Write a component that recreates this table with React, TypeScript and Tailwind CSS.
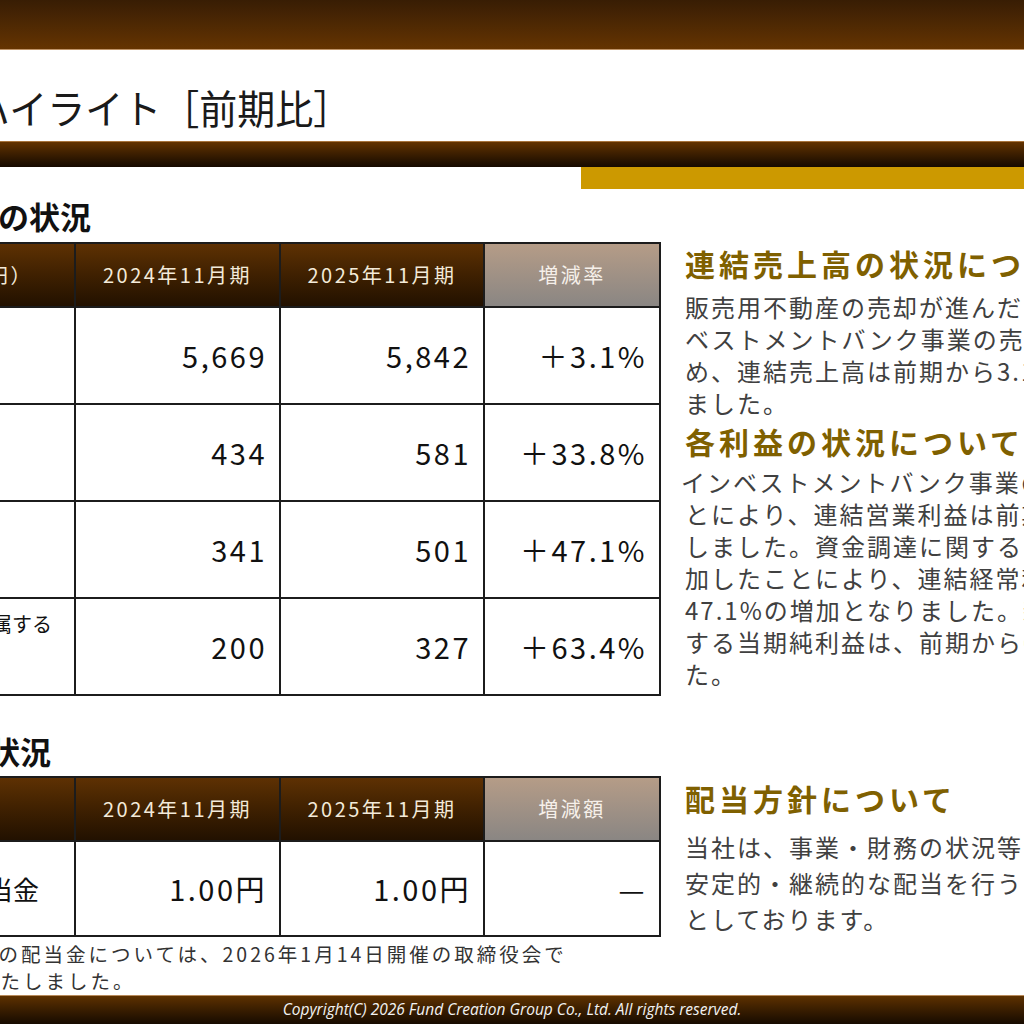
import React from "react";

const headCell =
  "flex items-center justify-center bg-linear-to-b from-[#5e3103] to-[#221100] text-[20px] tracking-[2.5px] text-[#f3ead9]";
const headCellGray =
  "flex items-center justify-center bg-linear-to-b from-[#b59c87] to-[#8a8683] text-[20px] tracking-[2.5px] text-[#f6f0ea]";
const numCell =
  "flex items-center justify-end bg-white pr-[12px] text-[29px] tracking-[2.5px] text-[#111]";

function Table1() {
  const rows: { label: string; a: string; b: string; c: string }[] = [
    { label: "売上高", a: "5,669", b: "5,842", c: "＋3.1%" },
    { label: "営業利益", a: "434", b: "581", c: "＋33.8%" },
    { label: "経常利益", a: "341", b: "501", c: "＋47.1%" },
  ];
  return (
    <div className="ml-[-165px] w-[826px] grid grid-cols-[237px_203px_202px_174px] grid-rows-[62px_95px_95px_95px_95px] gap-[2px] p-[2px] bg-[#1c1c1c]">
      <div className={headCell + " justify-end pr-[41px]"}>
        <span className="whitespace-nowrap">（単位：百万円）</span>
      </div>
      <div className={headCell}>2024年11月期</div>
      <div className={headCell}>2025年11月期</div>
      <div className={headCellGray}>増減率</div>
      {rows.map((r) => (
        <React.Fragment key={r.label}>
          <div className="flex items-center bg-white pl-[15px] text-[22px] text-[#111]">
            {r.label}
          </div>
          <div className={numCell}>{r.a}</div>
          <div className={numCell}>{r.b}</div>
          <div className={numCell}>{r.c}</div>
        </React.Fragment>
      ))}
      <div className="flex flex-col items-start bg-white pl-[15px] pt-[11px] text-[20px] leading-[28px] text-[#111]">
        <span className="whitespace-nowrap">親会社株主に帰属する</span>
        <span className="whitespace-nowrap">当期純利益</span>
      </div>
      <div className={numCell}>200</div>
      <div className={numCell}>327</div>
      <div className={numCell}>＋63.4%</div>
    </div>
  );
}

function Table2() {
  return (
    <div className="ml-[-165px] w-[826px] grid grid-cols-[237px_203px_202px_174px] grid-rows-[62px_93px] gap-[2px] p-[2px] bg-[#1c1c1c]">
      <div className={headCell} />
      <div className={headCell}>2024年11月期</div>
      <div className={headCell}>2025年11月期</div>
      <div className={headCellGray}>増減額</div>
      <div className="flex items-center justify-end bg-white pr-[35px] text-[26px] text-[#111]">
        <span className="whitespace-nowrap">1株当たり配当金</span>
      </div>
      <div className={numCell}>1.00円</div>
      <div className={numCell}>1.00円</div>
      <div className={numCell}>—</div>
    </div>
  );
}

const h3 =
  "h-[40px] leading-[40px] whitespace-nowrap text-[30px] font-bold tracking-[4px] text-[#7f6000]";
const bodyLine = "whitespace-nowrap text-[24px] tracking-[2px] text-[#404040]";

export default function App() {
  return (
    <div className="w-[1024px] h-[1024px] overflow-hidden bg-white flex flex-col font-['Noto_Sans_CJK_JP','Noto_Sans',sans-serif]">
      {/* top bar */}
      <div className="h-[49px] shrink-0 bg-linear-to-b from-[#381d04] to-[#653400]" />
      <div className="h-px shrink-0 bg-[#c09468]" />
      {/* title */}
      <div className="h-[91px] shrink-0 flex items-start pt-[38px]">
        <div className="ml-[-104px] whitespace-nowrap text-[38px] font-normal leading-none text-[#1a1a1a] scale-y-[1.05]">
          決算ハイライト［前期比］
        </div>
      </div>
      <div className="h-px shrink-0 bg-[#a8743c]" />
      <div className="h-[25px] shrink-0 bg-linear-to-b from-[#633300] to-[#160a00]" />
      <div className="h-[22px] shrink-0 flex justify-end">
        <div className="w-[443px] bg-[#cc9900]" />
      </div>

      {/* main */}
      <div className="flex flex-1 min-h-0">
        <div className="w-[661px] shrink-0 flex flex-col">
          <div className="h-[53px] flex items-center">
            <span className="ml-[-64px] whitespace-nowrap text-[31px] font-bold leading-none text-[#111]">
              業績の状況
            </span>
          </div>
          <Table1 />
          <div className="h-[80px] flex items-end pb-[10px]">
            <span className="ml-[-104px] whitespace-nowrap text-[31px] font-bold leading-[30px] text-[#111]">
              配当の状況
            </span>
          </div>
          <Table2 />
          <div className="pt-[3px] text-[19.5px] leading-[27px] tracking-[3px] text-[#333]">
            <div className="ml-[-24px] whitespace-nowrap">期の配当金については、2026年1月14日開催の取締役会で</div>
            <div className="ml-[-22px] whitespace-nowrap">いたしました。</div>
          </div>
        </div>

        <div className="ml-[24px] flex-1 min-w-0 flex flex-col pt-[54px]">
          <div className={h3}>連結売上高の状況について</div>
          <div className="mt-[8px] leading-[32px]">
            <div className={bodyLine}>販売用不動産の売却が進んだことにより、イン</div>
            <div className={bodyLine}>ベストメントバンク事業の売上高が増加したた</div>
            <div className={bodyLine}>め、連結売上高は前期から3.1%の増加となり</div>
            <div className={bodyLine}>ました。</div>
          </div>
          <div className={h3 + " mt-[2px]"}>各利益の状況について</div>
          <div className="mt-[5px] leading-[32px]">
            <div className={bodyLine + " ml-[-4px]"}>インベストメントバンク事業の売上高が増加したこ</div>
            <div className={bodyLine}>とにより、連結営業利益は前期から33.8%の増加と</div>
            <div className={bodyLine}>しました。資金調達に関する費用が減少し、収益が増</div>
            <div className={bodyLine}>加したことにより、連結経常利益は前期から</div>
            <div className={bodyLine}>47.1%の増加となりました。親会社株主に帰属</div>
            <div className={bodyLine}>する当期純利益は、前期から63.4%の増加となりまし</div>
            <div className={bodyLine}>た。</div>
          </div>
          <div className={h3 + " mt-[88px]"}>配当方針について</div>
          <div className="mt-[11px] leading-[36px]">
            <div className={bodyLine}>当社は、事業・財務の状況等を勘案しつつ、</div>
            <div className={bodyLine}>安定的・継続的な配当を行うことを基本方針</div>
            <div className={bodyLine}>としております。</div>
          </div>
        </div>
      </div>

      {/* footer */}
      <div className="h-px shrink-0 bg-[#b88b5c]" />
      <div className="h-[28px] shrink-0 flex items-center justify-center bg-linear-to-b from-[#5e3100] to-[#170b00]">
        <span className="font-['Open_Sans',sans-serif] italic text-[15.5px] text-[#f2f2f2]">
          Copyright(C) 2026 Fund Creation Group Co., Ltd. All rights reserved.
        </span>
      </div>
    </div>
  );
}
